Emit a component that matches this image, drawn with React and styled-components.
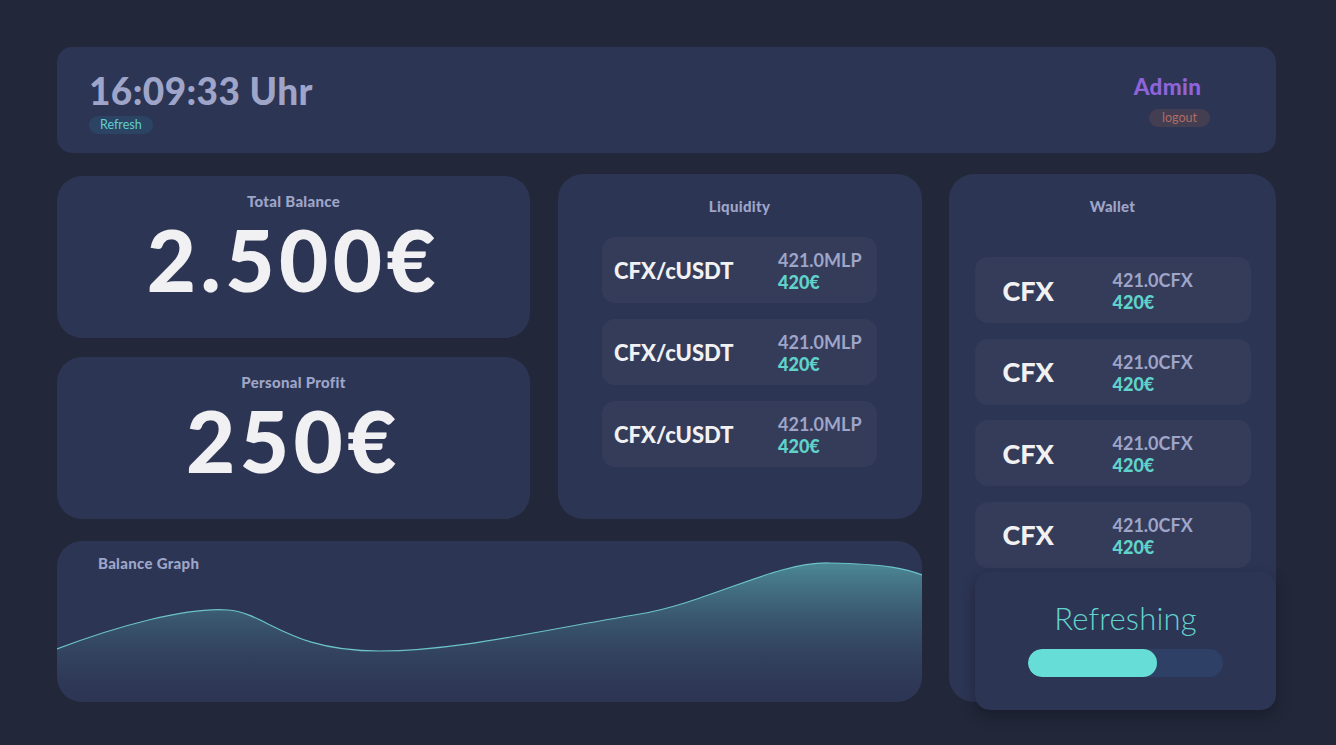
import React from "react";
import styled, { createGlobalStyle } from "styled-components";

const GlobalStyle = createGlobalStyle`
  html, body {
    margin: 0;
    padding: 0;
    background: #222839;
  }
  body {
    font-family: "Lato", "Noto Sans", sans-serif;
    color: #f2f2f4;
  }
`;

const Page = styled.div`
  width: 1336px;
  height: 745px;
  box-sizing: border-box;
  padding: 47px 60px 0 57px;
  display: flex;
  flex-direction: column;
  gap: 21px;
`;

const Card = styled.div`
  background: #2d3554;
  border-radius: 25px;
  box-sizing: border-box;
`;

const Header = styled(Card)`
  flex-shrink: 0;
  height: 106px;
  padding: 0 66px 0 32px;
  display: flex;
  align-items: center;
  justify-content: space-between;
  border-radius: 15px;
`;

const Clock = styled.div`
  display: flex;
  flex-direction: column;
  align-items: flex-start;
  gap: 5px;
  margin-top: 6px;
  h1 {
    margin: 0;
    font-size: 37px;
    font-weight: 900;
    color: #9ea5c9;
    letter-spacing: 0.4px;
    line-height: 1.05;
  }
`;

const Pill = styled.button`
  border: none;
  font-family: inherit;
  font-size: 12.5px;
  line-height: 1;
  padding: 3px 11px 2px;
  height: 18px;
  border-radius: 9px;
  background: ${(p) => p.$bg};
  color: ${(p) => p.$color};
`;

const User = styled.div`
  display: flex;
  flex-direction: column;
  align-items: center;
  gap: 9px;
  margin-top: 0;
  strong {
    font-size: 22.5px;
    font-weight: 900;
    color: #8e64d8;
    letter-spacing: 0.3px;
  }
  ${Pill} {
    margin-left: 24px;
    padding: 3px 13px 2px;
  }
`;

const Grid = styled.div`
  flex-shrink: 0;
  display: grid;
  grid-template-columns: 473px 364px 327px;
  grid-template-rows: 345px 161px;
  column-gap: 27.5px;
  row-gap: 22px;
`;

const Stack = styled.div`
  grid-column: 1;
  grid-row: 1;
  display: flex;
  flex-direction: column;
  gap: 19px;
  padding-top: 2px;
`;

const StatCard = styled(Card)`
  flex: 1;
  display: flex;
  flex-direction: column;
  align-items: center;
  padding-top: 16px;
  div {
    font-size: 85px;
    font-weight: 900;
    line-height: 1;
    margin-top: 7px;
    color: #f1f1f3;
    letter-spacing: 4.5px;
  }
`;

const Title = styled.h3`
  margin: 0;
  font-size: 15px;
  font-weight: 900;
  letter-spacing: 0.3px;
  color: #9ea5c9;
  text-align: ${(p) => p.$align || "center"};
`;

const ListCard = styled(Card)`
  padding: 23px 0 0;
  display: flex;
  flex-direction: column;
  align-items: center;
  position: relative;
  grid-column: ${(p) => p.$col};
  grid-row: ${(p) => p.$rows};
`;

const List = styled.div`
  display: flex;
  flex-direction: column;
  gap: ${(p) => p.$gap}px;
  margin-top: ${(p) => p.$top}px;
  width: ${(p) => p.$width}px;
`;

const Item = styled.div`
  height: 66px;
  background: #353c5a;
  border-radius: 13px;
  display: flex;
  align-items: center;
  padding-left: ${(p) => p.$pad}px;
  box-sizing: border-box;
`;

const Name = styled.span`
  font-size: ${(p) => p.$size}px;
  font-weight: 900;
  color: #f1f1f3;
  width: ${(p) => p.$width}px;
`;

const Values = styled.div`
  display: flex;
  flex-direction: column;
  font-size: 18px;
  font-weight: 700;
  line-height: 1.2;
  margin-top: 4px;
  span:first-child {
    color: #9ea5c9;
  }
  span:last-child {
    color: #5fd3cb;
    font-weight: 900;
  }
`;

const GraphCard = styled(Card)`
  grid-column: 1 / 3;
  grid-row: 2;
  position: relative;
  overflow: hidden;
  padding: 13px 41px;
  svg {
    position: absolute;
    left: 0;
    bottom: 0;
  }
`;

const Toast = styled.div`
  position: absolute;
  left: 26px;
  top: 398px;
  width: 301px;
  height: 138px;
  background: #2d3554;
  border-radius: 15px;
  box-shadow: 0 6px 14px rgba(15, 18, 30, 0.45);
  display: flex;
  flex-direction: column;
  align-items: center;
  padding-top: 27px;
  box-sizing: border-box;
  span {
    font-size: 31px;
    font-weight: 300;
    color: #62d2cc;
    letter-spacing: 0.2px;
  }
`;

const Track = styled.div`
  width: 195px;
  height: 28px;
  border-radius: 14px;
  background: #2f4066;
  margin-top: 12px;
  overflow: hidden;
`;

const Fill = styled.div`
  height: 100%;
  border-radius: 14px;
  background: #66ddd6;
`;

const liquidity = [1, 2, 3];
const wallet = [1, 2, 3, 4];

function Graph() {
  const d =
    "M0 108 C60 85 130 66 171 69 C210 72 230 110 323 110 C400 110 480 90 583 73 C650 62 720 20 773 22 C830 23 850 28 865 34";
  return (
    <svg width="865" height="161" viewBox="0 0 865 161">
      <defs>
        <linearGradient id="area" x1="0" y1="0" x2="0" y2="1">
          <stop offset="0%" stopColor="#4f919c" stopOpacity="0.9" />
          <stop offset="100%" stopColor="#2d3554" stopOpacity="0.2" />
        </linearGradient>
      </defs>
      <path d={d + " L865 161 L0 161 Z"} fill="url(#area)" />
      <path d={d} fill="none" stroke="#6bc3cb" strokeWidth="1.2" />
    </svg>
  );
}

export default function App() {
  return (
    <>
      <GlobalStyle />
      <Page>
        <Header>
          <Clock>
            <h1>16:09:33 Uhr</h1>
            <Pill $bg="#2b4463" $color="#5fcfd0">Refresh</Pill>
          </Clock>
          <User>
            <strong>Admin</strong>
            <Pill $bg="#433e52" $color="#b06c66">logout</Pill>
          </User>
        </Header>
        <Grid>
          <Stack>
            <StatCard>
              <Title>Total Balance</Title>
              <div>2.500€</div>
            </StatCard>
            <StatCard>
              <Title>Personal Profit</Title>
              <div>250€</div>
            </StatCard>
          </Stack>
          <ListCard $col="2" $rows="1">
            <Title>Liquidity</Title>
            <List $gap={16} $top={22} $width={275}>
              {liquidity.map((i) => (
                <Item key={i} $pad={12}>
                  <Name $size={22} $width={164}>CFX/cUSDT</Name>
                  <Values>
                    <span>421.0MLP</span>
                    <span>420€</span>
                  </Values>
                </Item>
              ))}
            </List>
          </ListCard>
          <ListCard $col="3" $rows="1 / 3">
            <Title>Wallet</Title>
            <List $gap={15.5} $top={42} $width={276}>
              {wallet.map((i) => (
                <Item key={i} $pad={28}>
                  <Name $size={27} $width={110}>CFX</Name>
                  <Values>
                    <span>421.0CFX</span>
                    <span>420€</span>
                  </Values>
                </Item>
              ))}
            </List>
            <Toast>
              <span>Refreshing</span>
              <Track>
                <Fill style={{ width: "66%" }} />
              </Track>
            </Toast>
          </ListCard>
          <GraphCard>
            <Title $align="left">Balance Graph</Title>
            <Graph />
          </GraphCard>
        </Grid>
      </Page>
    </>
  );
}
